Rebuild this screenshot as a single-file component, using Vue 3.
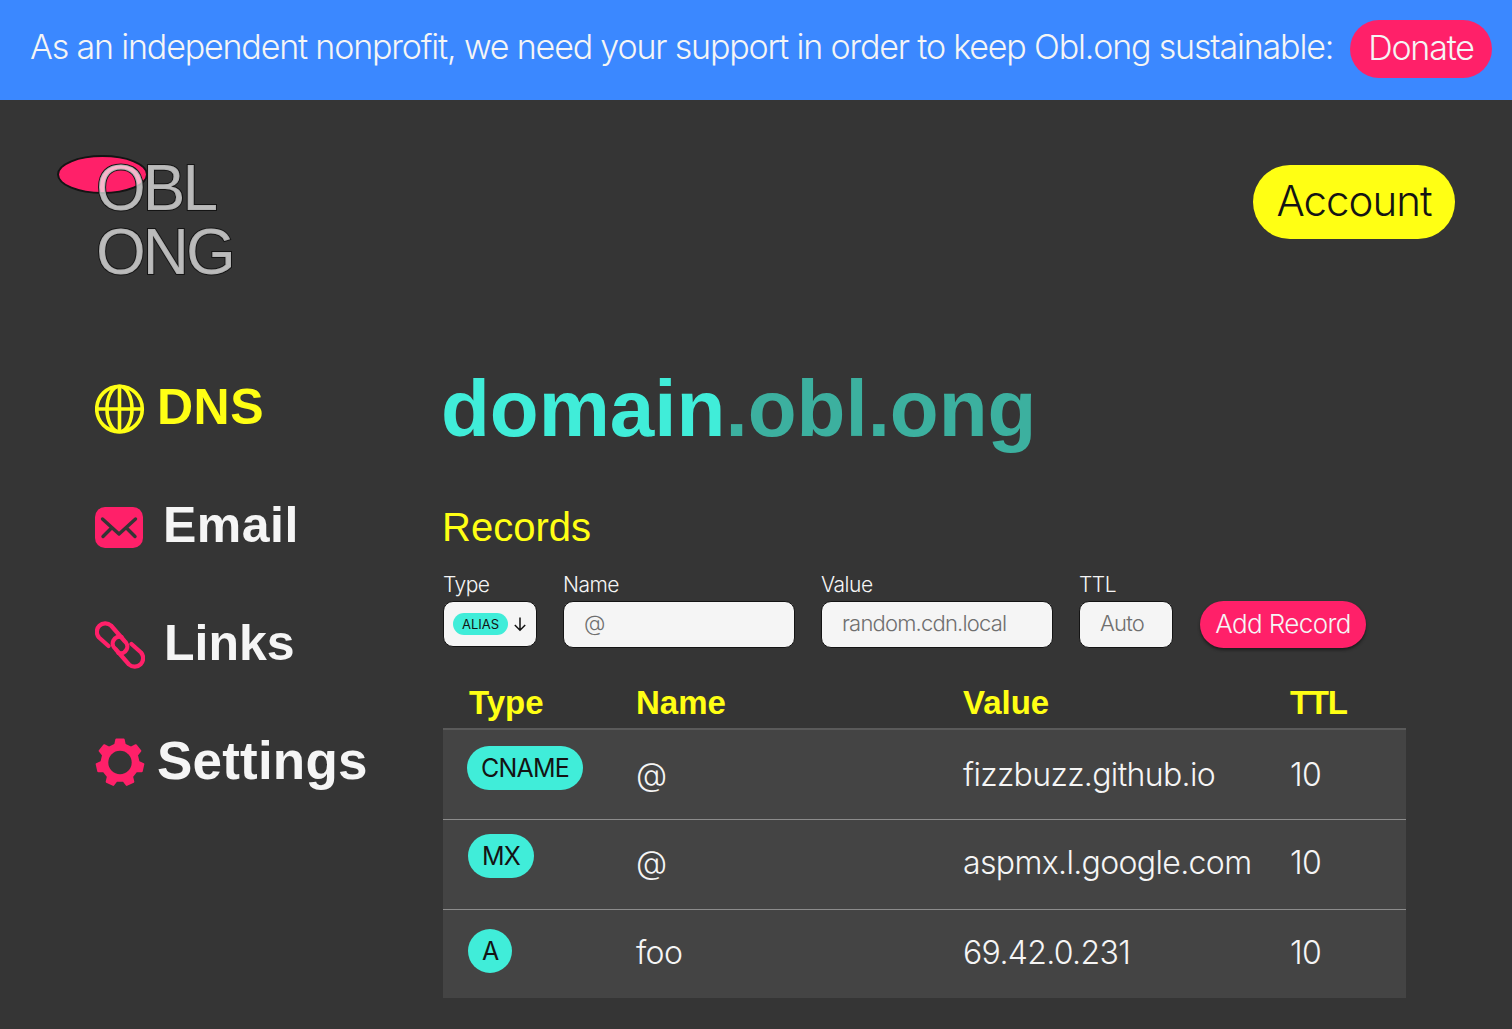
<template>
  <div class="page">
    <div class="banner">
      <span class="banner-text">As an independent nonprofit, we need your support in order to keep Obl.ong sustainable:</span>
      <button class="donate">Donate</button>
    </div>

    <header class="top">
      <div class="logo">
        <span class="logo-blob"></span>
        <span class="logo-text">OBL<br />ONG</span>
      </div>
      <button class="account">Account</button>
    </header>

    <div class="main">
      <nav class="nav">
        <a class="nav-item dns">
          <svg width="50" height="50" viewBox="0 0 50 50" fill="none" stroke="#ffff14" stroke-width="3.600">
            <circle cx="24.500" cy="25" r="22.800" />
            <ellipse cx="24.500" cy="25" rx="12.500" ry="22.800" />
            <path d="M24.500 2.200v45.600M2 25h45" />
          </svg>
          <span>DNS</span>
        </a>
        <a class="nav-item email">
          <svg width="48" height="41" viewBox="0 0 48 41">
            <rect width="48" height="41" rx="10" fill="#ff2069" />
            <path d="M7.500 12L24 27L40.500 12M8 29.500L16 21.500M40 29.500L32 21.500" fill="none" stroke="#353535" stroke-width="3.400" stroke-linecap="round" stroke-linejoin="round" />
          </svg>
          <span>Email</span>
        </a>
        <a class="nav-item links">
          <svg width="50" height="50" viewBox="0 0 50 50" fill="none" stroke="#ff2069" stroke-width="4.200" stroke-linecap="round" stroke-linejoin="round">
            <path d="M13.500 26L4 17.500A8.500 8.500 0 0 1 16 5.500L29.500 21A6.800 6.800 0 0 1 23.500 33" />
            <path d="M36.500 24L46 32.500A8.500 8.500 0 0 1 34 44.500L20.500 29A6.800 6.800 0 0 1 26.500 17" />
          </svg>
          <span>Links</span>
        </a>
        <a class="nav-item settings">
          <svg width="50" height="50" viewBox="0 0 50 50">
            <path :d="gearPath" fill="#ff2069" stroke="#ff2069" stroke-width="2" stroke-linejoin="round" />
            <circle cx="25" cy="24.500" r="11.700" fill="#353535" />
          </svg>
          <span>Settings</span>
        </a>
      </nav>

      <main class="content">
        <h1 class="domain">domain<span class="domain-end">.obl.ong</span></h1>
        <h2 class="records-title">Records</h2>

        <form class="record-form" @submit.prevent>
          <div class="field field-type">
            <label>Type</label>
            <div class="type-select">
              <span class="alias">ALIAS</span>
              <svg width="14" height="16" viewBox="0 0 14 16" fill="none" stroke="#111" stroke-width="1.500"><path d="M7 1.500v12.500M1.800 9l5.200 5.200L12.200 9" /></svg>
            </div>
          </div>
          <div class="field">
            <label>Name</label>
            <input class="input input-wide" placeholder="@" />
          </div>
          <div class="field">
            <label>Value</label>
            <input class="input input-wide" placeholder="random.cdn.local" />
          </div>
          <div class="field">
            <label>TTL</label>
            <input class="input input-ttl" placeholder="Auto" />
          </div>
          <button class="add">Add Record</button>
        </form>

        <table class="records">
          <thead>
            <tr>
              <th class="col-type">Type</th>
              <th class="col-name">Name</th>
              <th class="col-value">Value</th>
              <th class="col-ttl">TTL</th>
            </tr>
          </thead>
          <tbody>
            <tr v-for="r in records" :key="r.type">
              <td><span class="badge">{{ r.type }}</span></td>
              <td>{{ r.name }}</td>
              <td>{{ r.value }}</td>
              <td>{{ r.ttl }}</td>
            </tr>
          </tbody>
        </table>
      </main>
    </div>
  </div>
</template>

<script setup>
const records = [
  { type: 'CNAME', name: '@', value: 'fizzbuzz.github.io', ttl: 10 },
  { type: 'MX', name: '@', value: 'aspmx.l.google.com', ttl: 10 },
  { type: 'A', name: 'foo', value: '69.42.0.231', ttl: 10 }
]

// seven teeth, base and tip points for each one
const polar = (r, deg) => {
  const a = (deg * Math.PI) / 180
  return `${(25 + r * Math.cos(a)).toFixed(2)} ${(24.5 + r * Math.sin(a)).toFixed(2)}`
}
const gearPoints = []
for (let i = 0; i < 7; i++) {
  const mid = -90 + (i * 360) / 7
  gearPoints.push(polar(18.5, mid - 15), polar(23.4, mid - 9), polar(23.4, mid + 9), polar(18.5, mid + 15))
}
const gearPath = `M${gearPoints.join('L')}Z`
</script>

<style>
html,
body {
  margin: 0;
  background: #353535;
}
</style>

<style scoped>
.page {
  height: 1029px;
  overflow: hidden;
  background: #353535;
  color: #f5f5f5;
  font-family: Inter, "Liberation Sans", sans-serif;
  font-weight: 300;
}

.banner {
  height: 100px;
  box-sizing: border-box;
  padding: 0 20px 2px 30px;
  background: #3b88ff;
  display: flex;
  align-items: center;
  justify-content: space-between;
}

.banner-text {
  font-size: 34px;
  letter-spacing: -1.170px;
  line-height: 40px;
  margin-bottom: 4px;
  color: #f5f5f5;
  white-space: nowrap;
}

.donate {
  width: 142px;
  height: 58px;
  border: none;
  border-radius: 29px;
  background: #ff2069;
  color: #f5f5f5;
  font: 300 34px Inter, sans-serif;
  letter-spacing: -1.200px;
  padding: 0 0 4px;
}

.top {
  height: 255px;
  padding: 55px 57px 0 57px;
  box-sizing: border-box;
  display: flex;
  justify-content: space-between;
  align-items: flex-start;
}

.logo {
  position: relative;
  padding-left: 39px;
}

.logo-blob {
  position: absolute;
  left: 0;
  top: 0;
  width: 91px;
  height: 39px;
  border-radius: 50%;
  background: #ff2069;
  border: 2px solid #141414;
  box-sizing: border-box;
}

.logo-text {
  position: relative;
  display: block;
  font-family: "Liberation Sans", sans-serif;
  font-weight: 400;
  font-size: 64px;
  line-height: 64px;
  letter-spacing: -3px;
  color: rgba(245, 245, 245, 0.7);
  -webkit-text-stroke: 2px #141414;
  paint-order: stroke fill;
  margin-top: 1px;
}

.account {
  width: 202px;
  height: 74px;
  margin-top: 10px;
  border: none;
  border-radius: 37px;
  background: #ffff14;
  color: #141414;
  font: 300 42px Inter, sans-serif;
  letter-spacing: -1px;
  padding: 0 0 4px;
}

.main {
  display: flex;
  padding-left: 95px;
}

.nav {
  width: 348px;
  flex: none;
  padding-top: 29px;
  display: flex;
  flex-direction: column;
}

.nav-item {
  height: 50px;
  margin-bottom: 68px;
  display: flex;
  align-items: center;
  gap: 12px;
  font-family: "Liberation Sans", sans-serif;
  font-size: 50px;
  font-weight: 700;
  color: #f5f5f5;
}

.nav-item span {
  margin-top: -5px;
}

.dns {
  color: #ffff14;
  letter-spacing: 0.500px;
}

.email {
  gap: 20px;
  letter-spacing: 0.500px;
}

.links {
  gap: 19px;
}

.settings {
  font-size: 53px;
  letter-spacing: 0.200px;
}

.content {
  flex: 1;
  padding-right: 106px;
}

.domain {
  margin: 2px 0 0 -2px;
  font-family: "Liberation Sans", sans-serif;
  font-size: 80px;
  font-weight: 700;
  line-height: 104px;
  color: #40edd9;
  white-space: nowrap;
}

.domain-end {
  color: #3cb09f;
}

.records-title {
  margin: 41px 0 0 -1px;
  font-family: "Liberation Sans", sans-serif;
  font-size: 40px;
  font-weight: 400;
  line-height: 50px;
  color: #ffff14;
}

.record-form {
  margin-top: 19px;
  display: flex;
  align-items: flex-end;
  gap: 26px;
}

.field {
  display: flex;
  flex-direction: column;
  gap: 3px;
}

.field-type {
  margin-bottom: 1px;
}

.field label {
  font-size: 21px;
  line-height: 27px;
  letter-spacing: -0.500px;
  color: #f5f5f5;
}

.type-select {
  width: 94px;
  height: 46px;
  box-sizing: border-box;
  border: 1px solid #141414;
  border-radius: 10px;
  background: #f5f5f5;
  display: flex;
  align-items: center;
  gap: 5px;
  padding-left: 9px;
}

.alias {
  width: 55px;
  height: 22px;
  line-height: 22px;
  text-align: center;
  border-radius: 11px;
  background: #40edd9;
  color: #141414;
  font-size: 13px;
  font-weight: 400;
}

.input {
  height: 47px;
  box-sizing: border-box;
  border: 1px solid #141414;
  border-radius: 10px;
  background: #f5f5f5;
  padding: 0 20px 3px;
  font: 300 22px Inter, sans-serif;
  letter-spacing: -0.800px;
  outline: none;
}

.input::placeholder {
  color: #6f6f6f;
}

.input-wide {
  width: 232px;
}

.input-ttl {
  width: 94px;
}

.add {
  width: 166px;
  height: 47px;
  margin-left: 1px;
  border: none;
  border-radius: 24px;
  background: #ff2069;
  color: #f5f5f5;
  font: 300 26px Inter, sans-serif;
  letter-spacing: -0.600px;
  padding: 0 0 3px;
  box-shadow: 0 2px 3px #1c1c1c;
}

.records {
  width: 963px;
  margin-top: 24px;
  border-collapse: collapse;
  table-layout: fixed;
}

.records th {
  height: 57px;
  padding: 5px 0 0 26px;
  box-sizing: border-box;
  text-align: left;
  font-family: "Liberation Sans", sans-serif;
  font-size: 33px;
  font-weight: 700;
  color: #ffff14;
  border-bottom: 2px solid #5a5a5a;
}

.col-type {
  width: 167px;
}

.col-name {
  width: 327px;
}

.col-value {
  width: 327px;
}

.records th.col-ttl {
  letter-spacing: -1.300px;
}

.records td {
  height: 90px;
  padding: 0 0 0 26px;
  box-sizing: border-box;
  font-size: 32px;
  color: #f5f5f5;
  background: #444;
  letter-spacing: -0.650px;
  border-bottom: 1px solid #8c8c8c;
  vertical-align: middle;
}

.records tr:nth-child(2) td,
.records tr:last-child td {
  padding-bottom: 3px;
}

.records tr:last-child td {
  height: 89px;
  border-bottom: none;
}

.badge {
  display: inline-block;
  height: 44px;
  line-height: 44px;
  padding: 0 14px;
  border-radius: 22px;
  background: #40edd9;
  color: #141414;
  font-size: 25px;
  font-weight: 400;
  letter-spacing: -0.800px;
  margin: 0 0 13px -2px;
  vertical-align: middle;
}

.records tr:nth-child(2) .badge {
  margin: 0 0 13px -1px;
}

.records tr:last-child .badge {
  margin: 0 0 3px -1px;
}
</style>
